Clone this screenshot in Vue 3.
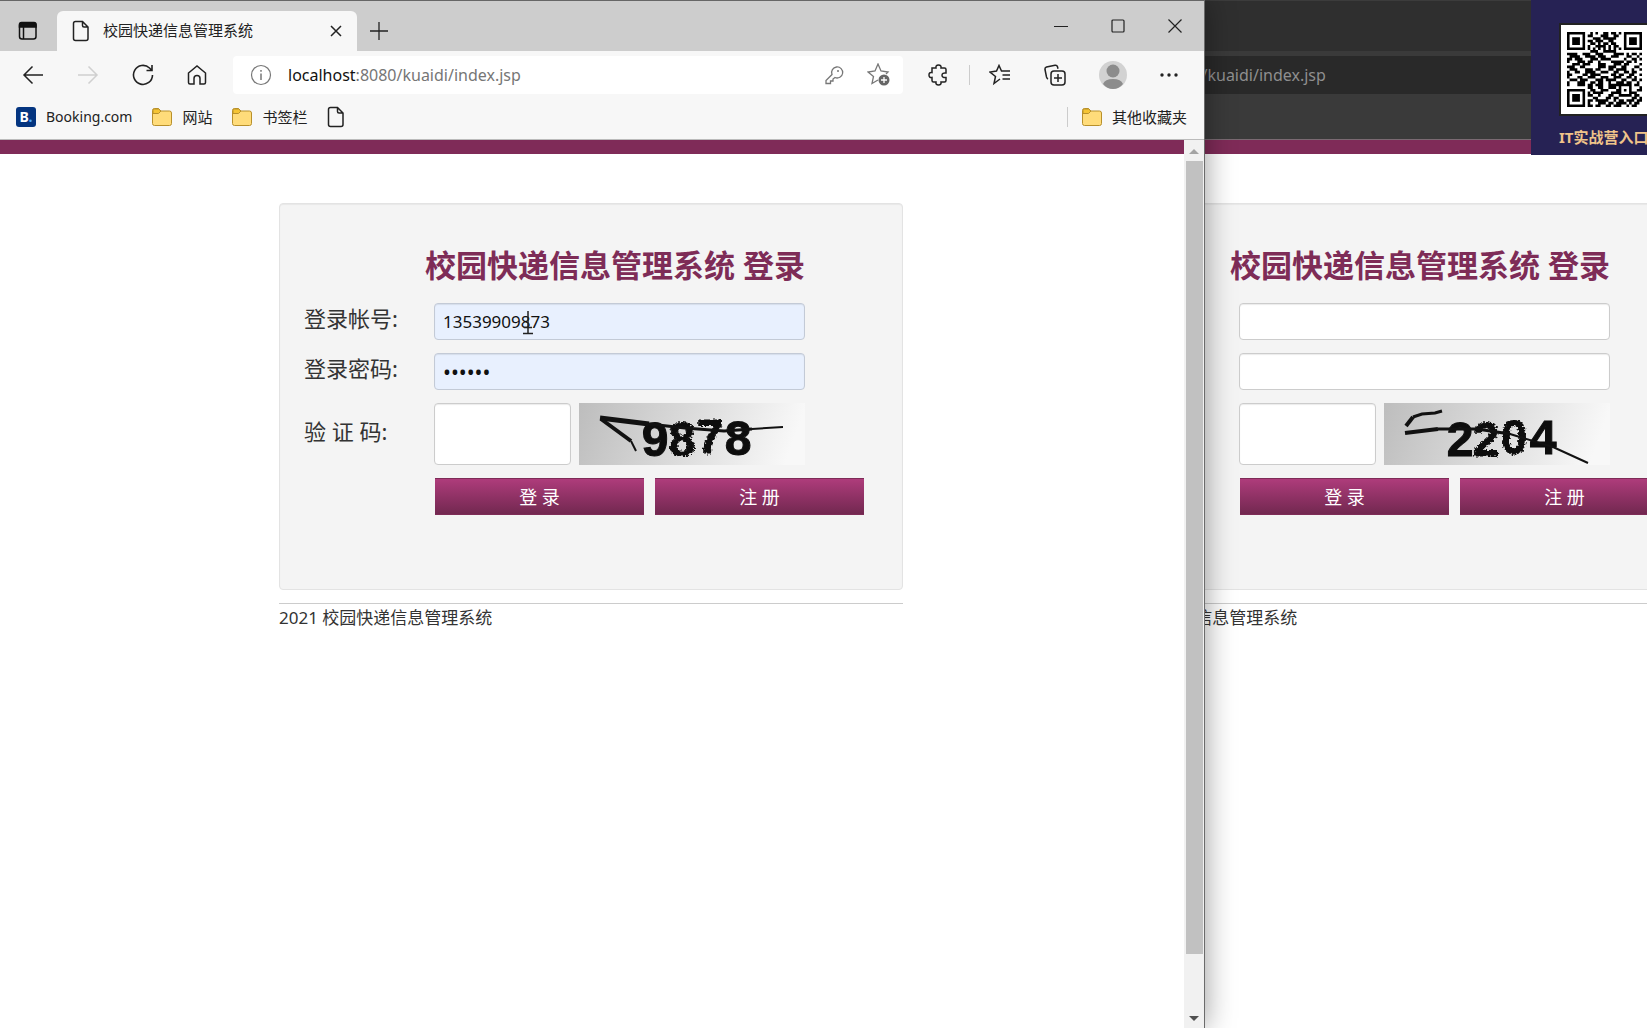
<script setup>
const windows = [
  {
    id: 'back',
    active: false,
    host: 'localhost',
    account: '',
    password: '',
    captcha: {
      digits: [
        { char: '2', x: 76, y: 53, rough: false },
        { char: '2', x: 102, y: 53, rough: true },
        { char: '0', x: 130, y: 51, rough: true },
        { char: '4', x: 159, y: 51, rough: false },
      ],
      strokes: [
        { d: 'M21 30 54 26', w: 4 },
        { d: 'M54 26 93 26 126 31', w: 3 },
        { d: 'M126 31 169 44 204 60', w: 2 },
        { d: 'M22 23 29 14', w: 4 },
        { d: 'M29 14 38 11 51 10 58 8', w: 3 },
      ],
    },
  },
  {
    id: 'front',
    active: true,
    host: 'localhost',
    account: '13539909873',
    password: '123456',
    captcha: {
      digits: [
        { char: '9', x: 76, y: 53, rough: false },
        { char: '8', x: 103, y: 53, rough: true },
        { char: '7', x: 131, y: 50, rough: true },
        { char: '8', x: 159, y: 52, rough: false },
      ],
      strokes: [
        { d: 'M21 15 70 21', w: 5 },
        { d: 'M70 21 106 25 145 28 173 26', w: 3 },
        { d: 'M173 26 204 24', w: 2 },
        { d: 'M22 16 52 38', w: 4 },
        { d: 'M52 38 57 48', w: 2 },
      ],
    },
  },
]

const qrRows = [
  '11111110010100110110101111111',
  '10000010110001110011001000001',
  '10111010001110111110001011101',
  '10111010110111001100001011101',
  '10111010011010110110001011101',
  '10000010100111101011001000001',
  '11111110101010101010101111111',
  '00000000011100111110000000000',
  '11110011100111000011110101101',
  '01111001111011100111000110010',
  '11011100011101111000001001101',
  '10001110110010000111110110100',
  '00111011100011100011101100001',
  '11100110000011101110011000110',
  '01110001110110001101111001001',
  '10011001111001110011001101100',
  '11000011011110000110110011001',
  '10001100111001110011100110100',
  '01110111000111011110011001101',
  '10001110011011001001110110010',
  '10001110110111001111111110110',
  '00000000110011001110100010001',
  '11111110011001110001101010011',
  '10000010101111000111100011100',
  '10111010110010001100111110110',
  '10111010001100011011000001101',
  '10111010110111110010110111011',
  '10000010100011101101111010110',
  '11111110110110011011100101100',
]
const qrPath = qrRows
  .flatMap((row, y) => [...row].map((bit, x) => (bit === '1' ? `M${x} ${y}h1v1h-1z` : '')))
  .join('')
</script>

<template>
  <div class="desktop">
    <section v-for="win in windows" :key="win.id" class="window" :class="win.id">
      <header class="titlebar">
        <template v-if="win.active">
          <button class="bare tab-menu" aria-label="标签页操作">
            <svg width="20" height="20" viewBox="0 0 20 20" fill="none" stroke="#111" stroke-width="1.5">
              <rect x="1.5" y="2" width="16.5" height="16" rx="2.5" />
              <path d="M1.5 3.5q0-2 2-2h12.500q2 0 2 2v2.500h-16.500z" fill="#111" />
              <path d="M5.500 6v12" />
            </svg>
          </button>
          <div class="tab">
            <svg width="18" height="22" viewBox="0 0 18 22" fill="none" stroke="#222" stroke-width="1.500">
              <path d="M3.500 1.500h7l5.500 5.500v11.500q0 2-2 2h-10.500q-2 0-2-2v-15q0-2 2-2zM10.500 1.500v4q0 1.500 1.500 1.500h4" />
            </svg>
            <span class="tab-title">校园快递信息管理系统</span>
            <button class="bare" aria-label="关闭标签页">
              <svg width="12" height="12" viewBox="0 0 12 12" stroke="#222" stroke-width="1.500"><path d="M1 1l10 10M11 1L1 11" /></svg>
            </button>
          </div>
          <button class="bare new-tab" aria-label="新建标签页">
            <svg width="18" height="18" viewBox="0 0 18 18" stroke="#222" stroke-width="1.300"><path d="M9 0v18M0 9h18" /></svg>
          </button>
          <div class="controls">
            <button class="bare" aria-label="最小化">
              <svg width="14" height="14" viewBox="0 0 14 14" stroke="#222"><path d="M0 7.500h14" /></svg>
            </button>
            <button class="bare" aria-label="最大化">
              <svg width="14" height="14" viewBox="0 0 14 14" fill="none" stroke="#222" stroke-width="1.200"><rect x="1" y="1" width="12" height="12" rx="1" /></svg>
            </button>
            <button class="bare" aria-label="关闭">
              <svg width="14" height="14" viewBox="0 0 14 14" stroke="#222" stroke-width="1.200"><path d="M.5.5l13 13M13.500.5L.5 13.500" /></svg>
            </button>
          </div>
        </template>
      </header>

      <nav class="toolbar">
        <div class="nav-buttons">
          <template v-if="win.active">
            <button class="bare" aria-label="后退">
              <svg width="22" height="20" viewBox="0 0 22 20" fill="none" stroke="#222" stroke-width="1.500"><path d="M21 10H2M10.500 1.500L2 10l8.500 8.500" /></svg>
            </button>
            <button class="bare" aria-label="前进">
              <svg width="22" height="20" viewBox="0 0 22 20" fill="none" stroke="#d0d0d0" stroke-width="1.500"><path d="M1 10h19M11.500 1.500L20 10l-8.500 8.500" /></svg>
            </button>
            <button class="bare" aria-label="刷新">
              <svg width="22" height="22" viewBox="0 0 22 22" fill="none" stroke="#222" stroke-width="1.600"><path d="M20.500 11a9.500 9.500 0 1 1-3-7l2 2M20 1v5.500h-5.500" /></svg>
            </button>
            <button class="bare" aria-label="主页">
              <svg width="20" height="20" viewBox="0 0 20 20" fill="none" stroke="#222" stroke-width="1.500"><path d="M1.500 8L10 1l8.500 7v9.500q0 1.500-1.500 1.500h-4v-5.500q0-3-3-3t-3 3v5.500H3q-1.500 0-1.500-1.500z" /></svg>
            </button>
          </template>
        </div>
        <div class="omnibox">
          <svg width="22" height="22" viewBox="0 0 22 22" fill="none" stroke="#777" stroke-width="1.200"><circle cx="11" cy="11" r="9.500" /><path d="M11 9.500v6.500M11 6v1.800" stroke-width="1.500" /></svg>
          <span class="url"><b>{{ win.host }}</b>:8080/kuaidi/index.jsp</span>
          <template v-if="win.active">
            <svg width="20" height="20" viewBox="0 0 20 20" fill="none" stroke="#777" stroke-width="1.300">
              <path d="M12.500 2a5.500 5.500 0 1 1-1.500 10.500l-2 1.500v2h-2.500v2.500h-4.500v-3l6-6A5.500 5.500 0 0 1 12.500 2z" /><circle cx="14" cy="6" r="1" fill="#777" stroke="none" />
            </svg>
            <svg class="add-star" width="24" height="24" viewBox="0 0 24 24" fill="none" stroke="#777" stroke-width="1.300">
              <path d="M11 17l-6 3.500 1.500-7L1 9l7-1L11 1l3 7 7 1-2 2" />
              <circle cx="17" cy="17" r="5.500" fill="#666" stroke="none" /><path d="M17 14v6M14 17h6" stroke="#fff" />
            </svg>
          </template>
        </div>
        <div v-if="win.active" class="tools">
          <button class="bare" aria-label="扩展">
            <svg width="20" height="22" viewBox="0 0 20 22" fill="none" stroke="#222" stroke-width="1.500">
              <path d="M4 4h4q-.5-3 2.500-3T13 4h3.500q1.500 0 1.500 1.500V9q-4-.5-4 2.200T18 13.500v3q0 1.500-1.500 1.500H13q.5 3-2.500 3T8 18H5.500Q4 18 4 16.500v-3q-3 .5-3-2.500t3-2.500z" />
            </svg>
          </button>
          <i class="divider"></i>
          <button class="bare" aria-label="收藏夹">
            <svg width="22" height="22" viewBox="0 0 22 22" fill="none" stroke="#222" stroke-width="1.500">
              <path d="M11 15l-6 4.500 1.500-7L1 8l6.500-1L10 1.500 12.500 7H21M13.500 11H21M13.500 15H21" />
            </svg>
          </button>
          <button class="bare" aria-label="集锦">
            <svg width="22" height="22" viewBox="0 0 22 22" fill="none" stroke="#222" stroke-width="1.500">
              <path d="M4 15q-1-.5-1.500-2L1 5.500q-.3-2 1.500-2.500L11 1.200q2-.3 2.500 1.500l.5 2" /><rect x="7" y="7" width="14" height="14" rx="3" /><path d="M14 10v8M10 14h8" />
            </svg>
          </button>
          <button class="bare" aria-label="个人资料">
            <svg width="28" height="28" viewBox="0 0 28 28"><circle cx="14" cy="14" r="14" fill="#d2d2d2" /><circle cx="14" cy="10" r="6.500" fill="#8c8c8c" /><path d="M4 23q2-5 10-5t10 5q-4 5-10 5T4 23z" fill="#8c8c8c" /></svg>
          </button>
          <button class="bare" aria-label="更多">
            <svg width="18" height="4" viewBox="0 0 18 4" fill="#222"><circle cx="2" cy="2" r="1.700" /><circle cx="9" cy="2" r="1.700" /><circle cx="16" cy="2" r="1.700" /></svg>
          </button>
        </div>
      </nav>

      <nav class="bookmarks">
        <template v-if="win.active">
          <a class="latin" href="#booking"><span class="booking">B<small>.</small></span>Booking.com</a>
          <a v-for="name in ['网站', '书签栏']" :key="name" :href="'#' + name">
            <svg width="20" height="20" viewBox="0 0 20 20" stroke="#b8902a" fill="#ffdc7a"><path d="M.5 3.500q0-2 2-2h4l2.500 2.500h8.500q2 0 2 2v10.500q0 2-2 2h-15q-2 0-2-2z" /><path d="M1 6.500h5.500l2.500-2.500L6.500 2H2.500Q1 2 1 3.500z" fill="#f5c433" /></svg>{{ name }}
          </a>
          <a href="#page" aria-label="新页面">
            <svg width="18" height="22" viewBox="0 0 18 22" fill="none" stroke="#222" stroke-width="1.500">
              <path d="M3.500 1.500h7l5.500 5.500v11.500q0 2-2 2h-10.500q-2 0-2-2v-15q0-2 2-2zM10.500 1.500v4q0 1.500 1.500 1.500h4" />
            </svg>
          </a>
          <i class="divider push"></i>
          <a class="others" href="#others">
            <svg width="20" height="20" viewBox="0 0 20 20" stroke="#b8902a" fill="#ffdc7a"><path d="M.5 3.500q0-2 2-2h4l2.500 2.500h8.500q2 0 2 2v10.500q0 2-2 2h-15q-2 0-2-2z" /><path d="M1 6.500h5.500l2.500-2.500L6.500 2H2.500Q1 2 1 3.500z" fill="#f5c433" /></svg>其他收藏夹
          </a>
        </template>
      </nav>

      <div class="viewport">
        <main class="page">
          <div class="content">
            <form class="card" @submit.prevent>
              <h1>校园快递信息管理系统 登录</h1>
              <div class="row">
                <label :for="win.id + '-account'">登录帐号:</label>
                <div class="field">
                  <input :id="win.id + '-account'" type="text" :value="win.account" :class="{ filled: win.account }" />
                  <svg v-if="win.active" class="caret" width="12" height="24" viewBox="0 0 12 24" fill="none" stroke="#222" stroke-width="1.500">
                    <path d="M6 0v22M1 22.500h10M2 16.500h8" />
                  </svg>
                </div>
              </div>
              <div class="row">
                <label :for="win.id + '-password'">登录密码:</label>
                <input :id="win.id + '-password'" type="password" :value="win.password" :class="{ filled: win.password }" />
              </div>
              <div class="row">
                <label class="tall" :for="win.id + '-code'">验 证 码:</label>
                <div class="code">
                  <input :id="win.id + '-code'" type="text" />
                  <svg class="captcha" viewBox="0 0 226 62" width="226" height="62" role="img" aria-label="验证码图片">
                    <defs>
                      <linearGradient :id="win.id + '-shade'" x1="0" y1="0" x2="1" y2="0.100">
                        <stop offset="0" stop-color="#bdbdbd" /><stop offset="1" stop-color="#f8f8f8" />
                      </linearGradient>
                      <filter :id="win.id + '-rough'" x="-10%" y="-10%" width="120%" height="120%">
                        <feTurbulence type="fractalNoise" baseFrequency="0.400" numOctaves="2" />
                        <feDisplacementMap in="SourceGraphic" scale="5" xChannelSelector="R" yChannelSelector="G" />
                        <feGaussianBlur stdDeviation="0.600" />
                      </filter>
                      <filter :id="win.id + '-soft'"><feGaussianBlur stdDeviation="0.700" /></filter>
                    </defs>
                    <rect width="226" height="62" :fill="`url(#${win.id}-shade)`" />
                    <text
                      v-for="(digit, i) in win.captcha.digits"
                      :key="i"
                      :x="digit.x"
                      :y="digit.y"
                      class="digit"
                      :filter="`url(#${win.id}-${digit.rough ? 'rough' : 'soft'})`"
                    >{{ digit.char }}</text>
                    <path v-for="(s, i) in win.captcha.strokes" :key="'s' + i" :d="s.d" :stroke-width="s.w" fill="none" stroke="#111" />
                  </svg>
                </div>
              </div>
              <div class="actions">
                <button type="submit">登 录</button>
                <button type="button">注 册</button>
              </div>
            </form>
            <footer>2021 校园快递信息管理系统</footer>
          </div>
        </main>
        <div v-if="win.active" class="scrollbar">
          <svg width="18" height="20" viewBox="0 0 18 20"><path d="M4 14l5-5 5 5z" fill="#a3a3a3" /></svg>
          <div class="track"><div class="thumb"></div></div>
          <svg width="18" height="20" viewBox="0 0 18 20"><path d="M4 8l5 5 5-5z" fill="#505050" /></svg>
        </div>
      </div>
    </section>

    <aside class="badge">
      <div class="qr">
        <svg viewBox="0 0 29 29" width="75" height="75" role="img" aria-label="二维码"><path :d="qrPath" /></svg>
      </div>
      <p>IT实战营入口</p>
    </aside>
  </div>
</template>

<style>
body {
  margin: 0;
  overflow: hidden;
}
</style>

<style scoped>
* {
  box-sizing: border-box;
}
.desktop {
  position: relative;
  height: 100vh;
  overflow: hidden;
  background: #fff;
  font-family: "Noto Sans", "Noto Sans CJK SC", sans-serif;
}
.window {
  position: absolute;
  top: 0;
  bottom: 0;
  width: calc(100vw - 442px);
  display: flex;
  flex-direction: column;
}
.front {
  left: 0;
  border-right: 1px solid #6b6b6b;
  box-shadow: 0 0 28px rgba(0, 0, 0, 0.4);
}
.back {
  left: 805px;
}
.bare {
  display: flex;
  padding: 0;
  border: 0;
  background: none;
}
svg {
  display: block;
  flex: none;
}

.titlebar {
  display: flex;
  align-items: center;
  height: 51px;
  padding-top: 10px;
  border-top: 1px solid #666;
  background: #cdcdcd;
}
.back .titlebar {
  background: #2f2f2f;
  border-top-color: #3c3c3c;
}
.tab-menu {
  width: 57px;
  padding-left: 18px;
}
.tab {
  display: flex;
  align-items: center;
  width: 300px;
  height: 40px;
  padding: 0 15px;
  border-radius: 6px 6px 0 0;
  background: #f7f7f7;
}
.tab-title {
  flex: 1;
  margin-left: 13px;
  padding-bottom: 2px;
  font-size: 15px;
  line-height: 20px;
  color: #222;
}
.new-tab {
  margin-left: 13px;
}
.controls {
  display: flex;
  gap: 43px;
  margin: 0 22px 10px auto;
}

.toolbar {
  display: flex;
  align-items: center;
  height: 47px;
  padding-left: 22px;
  background: #f7f7f7;
}
.back .toolbar,
.back .bookmarks {
  background: #3a3a3a;
}
.nav-buttons {
  display: flex;
  align-items: center;
  gap: 33px;
  width: 211px;
}
.omnibox {
  display: flex;
  flex: 1;
  align-items: center;
  height: 38px;
  padding: 0 12px 0 17px;
  border-radius: 4px;
  background: #fff;
}
.back .omnibox {
  background: #292929;
}
.url {
  flex: 1;
  margin-left: 16px;
  font-size: 16px;
  line-height: 24px;
  color: #767676;
}
.url b {
  font-weight: 400;
  color: #111;
}
.back .url {
  color: #8f8f8f;
}
.add-star {
  margin-left: 23px;
}
.tools {
  display: flex;
  align-items: center;
  gap: 33px;
  width: 301px;
  padding-left: 25px;
}
.divider {
  width: 1px;
  height: 20px;
  background: #ccc;
}
.tools .divider {
  margin: 0 -14px 0 -12px;
}

.bookmarks {
  display: flex;
  align-items: center;
  gap: 20px;
  height: 42px;
  padding: 0 17px 4px 16px;
  border-bottom: 1px solid #bbb;
  background: #f7f7f7;
}
.back .bookmarks {
  border-bottom-color: #7a6a72;
}
.bookmarks a {
  display: flex;
  align-items: center;
  gap: 10px;
  font-size: 15px;
  line-height: 20px;
  color: #222;
  text-decoration: none;
}
.bookmarks .latin {
  font-size: 14px;
}
.booking {
  width: 20px;
  height: 20px;
  border-radius: 3px;
  background: #043580;
  color: #fff;
  font-size: 14px;
  font-weight: 700;
  text-align: center;
}
.booking small {
  color: #4aa8ff;
  font-size: 14px;
}
.push {
  margin-left: auto;
}
.others {
  margin-left: -6px;
}

.viewport {
  display: flex;
  flex: 1;
  min-height: 0;
}
.page {
  flex: 1;
  padding-right: 2px;
  border-top: 14px solid #7f2b58;
  background: #fff;
}
.back .page {
  flex: 0 1 1184px;
}
.content {
  width: 624px;
  margin: 49px auto 0;
  color: #333;
}
.card {
  display: flex;
  flex-direction: column;
  gap: 13px;
  padding: 38px 24px 74px;
  border: 1px solid #e3e3e3;
  border-radius: 4px;
  background: #f4f4f4;
  box-shadow: inset 0 1px 1px rgba(0, 0, 0, 0.05);
}
h1 {
  width: 501px;
  margin: 0 0 2px;
  color: #7e2c57;
  font-size: 31px;
  line-height: 46px;
  text-align: right;
  white-space: nowrap;
}
.row {
  display: grid;
  grid-template-columns: 130px 371px;
}
label {
  font-size: 22px;
  line-height: 30px;
}
.tall {
  line-height: 56px;
}
input {
  width: 100%;
  height: 37px;
  padding: 0 8px;
  border: 1px solid #ccc;
  border-radius: 4px;
  background: #fff;
  box-shadow: inset 0 1px 1px rgba(0, 0, 0, 0.08);
  color: #111;
  font-family: "Noto Sans", sans-serif;
  font-size: 17px;
}
input[type="password"] {
  font-size: 21px;
}
.filled {
  background: #e8f0fe;
  border-color: #c3cad6;
}
.field {
  position: relative;
}
.caret {
  position: absolute;
  left: 88px;
  top: 8px;
}
.code {
  display: flex;
  justify-content: space-between;
}
.code input {
  width: 137px;
  height: 62px;
}
.captcha {
  overflow: visible;
}
.digit {
  font: 700 48px "Liberation Sans", sans-serif;
  text-anchor: middle;
  fill: #0a0a0a;
  stroke: #0a0a0a;
  stroke-width: 1;
}
.actions {
  display: flex;
  gap: 11px;
  margin-left: 131px;
}
.actions button {
  width: 209px;
  height: 37px;
  padding: 0 0 2px;
  border: 1px solid #7e2c57;
  border-width: 1px 0;
  background: linear-gradient(#ae3c7b, #722850);
  color: #fff;
  font-family: inherit;
  font-size: 18px;
}
footer {
  margin-top: 13px;
  border-top: 1px solid #ccc;
  font-size: 17px;
  line-height: 28px;
}

.scrollbar {
  display: flex;
  flex-direction: column;
  width: 20px;
  padding-left: 1px;
  background: #f1f1f1;
}
.track {
  flex: 1;
  padding: 1px 1px 54px;
}
.thumb {
  height: 100%;
  background: #c1c1c1;
}

.badge {
  position: absolute;
  top: 0;
  right: 0;
  width: 116px;
  height: 155px;
  padding: 23px 0 0 28px;
  overflow: hidden;
  background: #262254;
}
.qr {
  width: 92px;
  padding: 7px 6px;
  border: 2px solid #222;
  background: #fff;
}
.badge p {
  margin: 9px 0 0;
  color: #f0c48a;
  font-size: 15px;
  font-weight: 700;
  line-height: 24px;
  white-space: nowrap;
}
</style>
